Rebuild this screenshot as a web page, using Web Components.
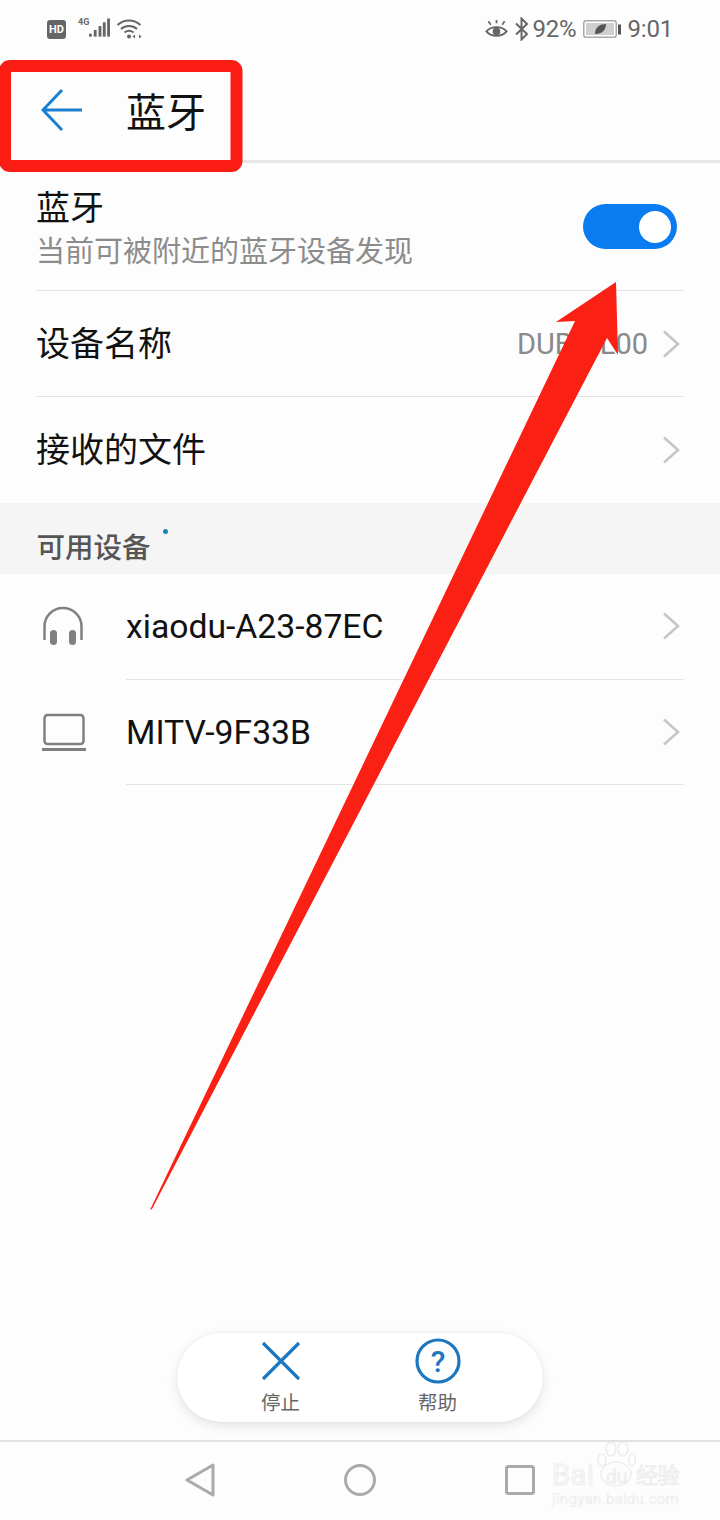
<!DOCTYPE html>
<html lang="zh"><head><meta charset="utf-8">
<style>
html,body{margin:0;padding:0;background:#fdfdfd}
body{font-family:Roboto,"Noto Sans CJK SC",sans-serif;width:720px;height:1520px;overflow:hidden}
</style></head>
<body>
<phone-page>
  <status-bar></status-bar>
  <title-bar>蓝牙</title-bar>
  <setting-row kind="switch" label="蓝牙" sub="当前可被附近的蓝牙设备发现"></setting-row>
  <setting-row label="设备名称" value="DUB-AL00" chevron></setting-row>
  <setting-row label="接收的文件" chevron last></setting-row>
  <section-header>可用设备</section-header>
  <device-row icon="headset">xiaodu-A23-87EC</device-row>
  <device-row icon="laptop">MITV-9F33B</device-row>
  <action-pill></action-pill>
  <nav-bar></nav-bar>
  <baidu-mark></baidu-mark>
  <red-annotations></red-annotations>
</phone-page>
<script>
const def=(name,html)=>customElements.define(name,class extends HTMLElement{
  constructor(){super();this.attachShadow({mode:'open'});}
  connectedCallback(){this.shadowRoot.innerHTML=typeof html==='function'?html(this):html;}
});
const CJK='"Noto Sans CJK SC",sans-serif';
const chev='<svg width="20" height="30" viewBox="0 0 20 30"><path d="M3 2.5 17 15 3 27.5" fill="none" stroke="#c6c6c6" stroke-width="2.6"/></svg>';

def('phone-page',`<style>:host{display:flex;flex-direction:column;position:relative;width:720px;height:1520px;background:#fdfdfd;color:#111}</style><slot></slot>`);

def('status-bar',`<style>
:host{display:flex;align-items:center;height:60px;padding:0 47px 2px 47px;box-sizing:border-box;color:#666;font-family:Roboto,sans-serif}
.hd{width:19px;height:19px;border-radius:3px;background:#666;color:#fff;font:700 11px/19px Roboto,sans-serif;text-align:center;margin-right:12px}
.net{display:flex;align-items:flex-start;width:32px;height:22px}
.g{font:700 9px/10px Roboto,sans-serif;margin-top:-1px;width:11px;flex:none}
.sp{flex:1}
.t{font-size:24px;line-height:28px;letter-spacing:-.2px}
svg{display:block;flex:none}
</style>
<div class="hd">HD</div>
<div class="net"><span class="g">4G</span>
<svg width="21" height="21" viewBox="0 0 22 21" fill="#666"><rect x="0" y="16" width="3" height="3"/><rect x="5" y="12" width="3" height="7"/><rect x="10" y="8" width="3" height="11"/><rect x="14.500" y="4" width="3" height="15"/><rect x="19" y="0" width="3" height="19"/></svg></div>
<svg style="margin-left:6px" width="27" height="22" viewBox="0 0 27 22" fill="none" stroke="#666" stroke-width="2"><path d="M1.500 7C8 1 18 1 24.500 7M5 11c4.500-4 11.500-4 16 0M8.500 14.500c3-2.300 6-2.300 9 0"/><circle cx="13" cy="18.500" r="2" fill="#666" stroke="none"/><path d="M19 16.500v4l-2.500-2zM23 16.500v4l2.500-2z" fill="#666" stroke="none"/></svg>
<div class="sp"></div>
<svg width="23" height="20" viewBox="0 0 24 20" fill="none" stroke="#666" stroke-width="2"><path d="M1.500 12.500C6 6.500 18 6.500 22.500 12.500 18 18.500 6 18.500 1.500 12.500Z"/><circle cx="12" cy="12.500" r="4" fill="#666" stroke="none"/><path d="M3.500 2 6 5.500M12 0.500v3.500M20.500 2 18 5.500" stroke-width="1.800"/></svg>
<svg style="margin-left:7px" width="14" height="24" viewBox="0 0 14 24" fill="none" stroke="#666" stroke-width="2"><path d="M1 6.500 12 17 6.500 22.500V1.500L12 7 1 17.500"/></svg>
<span class="t" style="margin-left:4px">92%</span>
<svg style="margin-left:6px" width="38" height="18" viewBox="0 0 38 18"><rect x=".75" y=".75" width="32.500" height="16.500" rx="2.500" fill="#fff" stroke="#aaa" stroke-width="1.500"/><rect x="3" y="3" width="28" height="12" fill="#cfcfcf"/><path d="M12 14C12 7 17 4 23 4 23 10 19 14 12 14Z" fill="#555"/><rect x="35" y="4.500" width="3" height="10" fill="#555"/></svg>
<span class="t" style="margin-left:7px">9:01</span>`);

def('title-bar',`<style>
:host{display:flex;align-items:center;padding-left:41px;box-sizing:border-box;border-bottom:3px solid #e6e6e6;height:103px}
span{font:40px/50px ${CJK};color:#111;margin-left:43px}
svg{display:block;flex:none}
</style>
<svg width="42" height="44" viewBox="0 0 42 44" fill="none" stroke="#1b7fd0" stroke-width="3"><path d="M41 22H2M21 2 2 22 21 42"/></svg>
<span><slot></slot></span>`);

def('setting-row',h=>{
 const a=n=>h.getAttribute(n),sw=a('kind')==='switch',last=h.hasAttribute('last');
 return `<style>
:host{display:block;padding-left:36px;padding-right:36px}
.r{display:flex;align-items:center;height:${sw?127:last?106:105}px;${last?'':'border-bottom:1.5px solid #e4e4e4'}}
.m{flex:1;min-width:0;${sw?'':'margin-bottom:4px'}}
.l{font:34px/42px ${CJK};color:#111}
.s{font:29px/38px ${CJK};color:#8c8c8c;margin-top:3px}
.v{font:29px/36px Roboto,sans-serif;color:#8a8a8a;margin-right:13px}
svg{display:block;margin-right:3px}
.sw{width:94px;height:45px;border-radius:23px;background:#0a7cf0;margin-right:7px;display:flex;justify-content:flex-end;align-items:center;padding-right:6px;box-sizing:border-box}
.k{width:32px;height:32px;border-radius:50%;background:#fff}
</style><div class="r"><div class="m"><div class="l">${a('label')}</div>${a('sub')?`<div class="s">${a('sub')}</div>`:''}</div>
${a('value')?`<span class="v">${a('value')}</span>`:''}${h.hasAttribute('chevron')?chev:''}${sw?'<div class="sw"><div class="k"></div></div>':''}</div>`});

def('section-header',`<style>
:host{display:flex;align-items:center;height:71px;padding:0 0 0 36.5px;background:#f5f5f5;box-sizing:border-box;position:relative}
span{font:500 28.500px/40px ${CJK};color:#555;margin-top:15px}
i{position:absolute;left:163px;top:26px;width:5px;height:5px;border-radius:50%;background:#1f80b8}
</style><span><slot></slot></span><i></i>`);

def('device-row',h=>{
 const ic=h.getAttribute('icon')==='headset'
 ?'<svg width="44" height="44" viewBox="0 0 44 44" fill="none" stroke="#808080"><path d="M3.500 35V21.500a18.500 18.500 0 0 1 37 0V35" stroke-width="2.500"/><rect x="9" y="25" width="7" height="15" rx="3.500" fill="#808080" stroke="none"/><rect x="28" y="25" width="7" height="15" rx="3.500" fill="#808080" stroke="none"/></svg>'
 :'<svg width="46" height="38" viewBox="0 0 46 38" fill="none" stroke="#808080" stroke-width="2.500"><rect x="3.500" y="2" width="39" height="29" rx="3"/><path d="M1 36.500h44" stroke-width="3"/></svg>';
 return `<style>
:host{display:flex;align-items:stretch;padding-right:36px}
.i{width:126px;display:flex;align-items:center;padding-left:41px;box-sizing:border-box;flex:none}
.r{flex:1;display:flex;align-items:center;justify-content:space-between;height:104.500px;border-bottom:1.500px solid #e4e4e4;font:33.700px/40px Roboto,sans-serif;color:#111}
span{margin-top:2px}
svg{display:block}.r svg{margin-right:3px}
</style><div class="i">${ic}</div><div class="r"><span><slot></slot></span>${chev}</div>`});

def('action-pill',`<style>
:host{display:flex;margin:auto 0 18px 177px;width:366px;height:89px;border-radius:45px;background:#fff;box-shadow:0 4px 12px rgba(0,0,0,.1),0 0 2px rgba(0,0,0,.08);padding-left:25px;box-sizing:border-box}
.a{width:157px;display:flex;flex-direction:column;align-items:center;padding-top:5px;font:19.500px/26px ${CJK};color:#666}
.a:first-child{width:156px}
svg{display:block;height:46px;margin-bottom:5px}
</style>
<div class="a"><svg width="46" height="46" viewBox="0 0 46 46" stroke="#1b78c0" stroke-width="3.200" fill="none"><path d="M5 5 41 41M41 5 5 41"/></svg>停止</div>
<div class="a"><svg width="46" height="46" viewBox="0 0 46 46" fill="none"><circle cx="23" cy="23" r="21" stroke="#1b78c0" stroke-width="3.200"/><text x="23" y="33.500" text-anchor="middle" font-family="Roboto,sans-serif" font-weight="500" font-size="30" fill="#1b78c0">?</text></svg>帮助</div>`);

def('nav-bar',`<style>
:host{display:flex;height:80px;border-top:2px solid #e2e2e2;box-sizing:border-box;align-items:center;padding:0 0 2px 185px}
svg{display:block;flex:none}
</style>
<svg width="30" height="34" viewBox="0 0 30 34" fill="none" stroke="#aaa" stroke-width="3" stroke-linejoin="round"><path d="M28 2V32L2 17Z"/></svg>
<svg style="margin-left:129px" width="32" height="32" viewBox="0 0 32 32" fill="none" stroke="#aaa" stroke-width="3"><circle cx="16" cy="16" r="14.500"/></svg>
<svg style="margin-left:129px" width="30" height="30" viewBox="0 0 30 30" fill="none" stroke="#aaa" stroke-width="3"><rect x="1.500" y="1.500" width="27" height="27" rx="2"/></svg>`);

def('baidu-mark',`<style>
:host{position:absolute;left:552px;top:1442px;width:140px;height:70px;color:#fbfbfb;pointer-events:none}
span{position:absolute;white-space:nowrap;-webkit-text-stroke:1px #ededed;font-family:Roboto,"Noto Sans CJK SC",sans-serif}
svg{position:absolute;left:44px;top:0}
</style>
<span style="left:0;top:19px;font-size:29px;line-height:28px;letter-spacing:.5px">Bai</span>
<svg width="40" height="46" viewBox="0 0 40 46" fill="none" stroke="#ededed" stroke-width="1.500"><ellipse cx="6" cy="18" rx="4" ry="6"/><ellipse cx="15" cy="7" rx="5" ry="7"/><ellipse cx="27" cy="7" rx="5" ry="7"/><ellipse cx="36" cy="18" rx="3.500" ry="6"/><ellipse cx="20" cy="32" rx="15" ry="12"/></svg>
<span style="left:54px;top:24px;font-size:19px;line-height:22px">du</span>
<span style="left:84px;top:17px;font-size:22px;line-height:28px;font-family:'Noto Sans CJK SC',sans-serif;letter-spacing:-.5px">经验</span>
<span style="left:0;top:47px;font-size:15px;line-height:20px;letter-spacing:.3px;-webkit-text-stroke:.6px #ededed">jingyan.baidu.com</span>`);

def('red-annotations',`<style>
:host{position:absolute;left:0;top:0;width:720px;height:1520px;pointer-events:none}
svg{position:absolute;left:0;top:0}
</style>
<svg width="720" height="1520" viewBox="0 0 720 1520">
<rect x="5" y="66" width="231.500" height="100" rx="5" fill="none" stroke="#fb1c14" stroke-width="12"/>
<path d="M616 282 556 322 575 321 150 1210 152 1209 607 338 618 355Z" fill="#fb2014"/>
</svg>`);
</script>
</body></html>
